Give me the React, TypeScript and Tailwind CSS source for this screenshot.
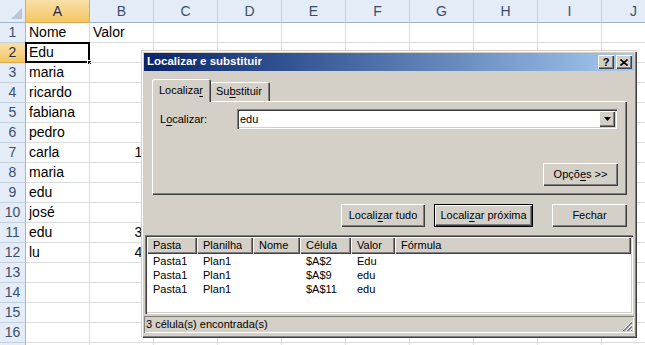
import React from "react";

const names = ["Nome", "Edu", "maria", "ricardo", "fabiana", "pedro", "carla", "maria", "edu", "josé", "edu", "lu"];
const nums: Record<number, string> = { 7: "10", 11: "30", 12: "40" };
const cols = ["A", "B", "C", "D", "E", "F", "G", "H", "I", "J"];

const raised = "shadow-[inset_1px_1px_#fff,inset_-1px_-1px_#404040,inset_-2px_-2px_#808080]";
const sunken = "shadow-[inset_1px_1px_#808080,inset_2px_2px_#404040,inset_-1px_-1px_#fff,inset_-2px_-2px_#d4d0c8]";

const U = ({ children }: { children: React.ReactNode }) => <span className="underline underline-offset-[2px]">{children}</span>;

const Sheet = () => (
    <div className="w-[645px] h-[345px] overflow-hidden bg-white font-['Liberation_Sans',Arial,sans-serif] text-[14px] text-black">
        <div className="flex h-[23px]">
            <div className="w-[26px] shrink-0 bg-[#e4ecf7] border-r border-b border-[#9eb6ce] relative">
                <div className="absolute right-[3px] bottom-[3px] w-0 h-0 border-l-[11px] border-l-transparent border-b-[11px] border-b-[#b8c6d8]"></div>
            </div>
            {cols.map((c, i) => (
                <div
                    key={c}
                    className={`w-[64px] shrink-0 border-r border-b flex items-center justify-center text-[14px] ${i === 0 ? "bg-gradient-to-b from-[#f9e1a8] to-[#f3c661] border-r-[#e2a94c] border-b-[#e2a94c] text-[#1f2f4a]" : "bg-[#e4ecf7] border-r-[#c3d0e0] border-b-[#9eb6ce] text-[#3a4f6d]"}`}
                >
                    {c}
                </div>
            ))}
        </div>
        {Array.from({ length: 16 }).map((_, r) => {
            const row = r + 1;
            const sel = row === 2;
            return (
                <div key={row} className="flex h-[20px]">
                    <div className={`w-[26px] shrink-0 border-r border-b flex items-center justify-center text-[14px] ${sel ? "bg-gradient-to-b from-[#f9e1a8] to-[#f3c661] border-r-[#e2a94c] border-b-[#e2a94c] text-[#1f2f4a]" : "bg-[#e4ecf7] border-r-[#9eb6ce] border-b-[#c3d0e0] text-[#3a4f6d]"}`}>
                        {row}
                    </div>
                    {cols.map((c, i) => (
                        <div key={c} className={`w-[64px] shrink-0 border-r border-b border-[#dadcdd] px-[3px] leading-[19px] whitespace-nowrap relative ${i === 1 && nums[row] ? "text-right" : ""}`}>
                            {i === 0 && names[r]}
                            {i === 1 && row === 1 && "Valor"}
                            {i === 1 && nums[row]}
                            {i === 0 && sel && (
                                <>
                                    <div className="absolute left-[-1px] top-[-1px] right-[-1px] bottom-[-1px] border-2 border-black"></div>
                                    <div className="absolute right-[-3px] bottom-[-3px] w-[5px] h-[5px] bg-black border border-white"></div>
                                </>
                            )}
                        </div>
                    ))}
                </div>
            );
        })}
        <div className="flex h-[20px]">
            <div className="w-[26px] shrink-0 border-r border-[#9eb6ce] bg-[#e4ecf7]"></div>
            {cols.map((c) => (
                <div key={c} className="w-[64px] shrink-0 border-r border-[#dadcdd]"></div>
            ))}
        </div>
    </div>
);

const Dialog = () => (
    <div className="absolute left-[141px] top-[50px] w-[496px] h-[288px] bg-[#d4d0c8] p-[3px] flex flex-col font-['Liberation_Sans',Arial,sans-serif] text-[11px] text-black shadow-[inset_1px_1px_#d4d0c8,inset_2px_2px_#fff,inset_-1px_-1px_#404040,inset_-2px_-2px_#808080]">
        {/* title */}
        <div className="h-[18px] flex items-center justify-between bg-gradient-to-r from-[#0a246a] to-[#a6caf0] pl-[3px] pr-[2px]">
            <span className="text-white font-bold text-[11.5px]">Localizar e substituir</span>
            <div className="flex gap-[2px]">
                <div className={`w-[16px] h-[14px] bg-[#d4d0c8] ${raised} flex items-center justify-center font-bold text-[11px] leading-none`}>?</div>
                <div className={`w-[16px] h-[14px] bg-[#d4d0c8] ${raised} flex items-center justify-center`}>
                    <svg width="8" height="7" viewBox="0 0 8 7">
                        <path d="M0.5 0.5 L7.5 6.5 M7.5 0.5 L0.5 6.5" stroke="#000" strokeWidth="1.6" />
                    </svg>
                </div>
            </div>
        </div>

        {/* tabs */}
        <div className="ml-[8px] mt-[8px] flex items-end h-[22px]">
            <div className="w-[59px] h-[23px] -mb-px relative z-10 bg-[#d4d0c8] rounded-t-[2px] shadow-[inset_1px_1px_#fff,inset_-1px_0_#404040,inset_-2px_0_#808080] flex items-center pl-[7px] pb-[1px]">
                Localiza<U>r</U>
            </div>
            <div className="w-[60px] h-[19px] -ml-[1px] bg-[#d4d0c8] rounded-t-[2px] shadow-[inset_1px_1px_#fff,inset_-1px_0_#404040,inset_-2px_0_#808080] flex items-center pl-[6px]">
                Su<U>b</U>stituir
            </div>
        </div>
        <div className={`ml-[8px] w-[475px] h-[94px] ${raised} flex flex-col`}>
            <div className="flex items-center mt-[8px] h-[20px]">
                <span className="w-[85px] pl-[8px]">
                    L<U>o</U>calizar:
                </span>
                <div className={`w-[380px] h-[20px] bg-white ${sunken} flex items-center justify-between pl-[3px] pr-[2px]`}>
                    <span>edu</span>
                    <div className={`w-[16px] h-[16px] bg-[#d4d0c8] ${raised} flex items-center justify-center`}>
                        <svg width="7" height="4" viewBox="0 0 7 4">
                            <path d="M0 0 H7 L3.5 4 Z" fill="#000" />
                        </svg>
                    </div>
                </div>
            </div>
            <div className="flex justify-end mt-[34px] pr-[9px]">
                <div className={`w-[75px] h-[23px] ${raised} flex items-center justify-center`}>
                    Opçõ<U>e</U>s &gt;&gt;
                </div>
            </div>
        </div>

        {/* buttons */}
        <div className="flex mt-[9px] ml-[197px] h-[23px]">
            <div className={`w-[84px] h-[23px] ${raised} flex items-center justify-center`}>
                Locali<U>z</U>ar tudo
            </div>
            <div className="ml-[9px] w-[99px] h-[23px] border border-black">
                <div className={`w-full h-full ${raised} flex items-center justify-center`}>
                    Locali<U>z</U>ar próxima
                </div>
            </div>
            <div className={`ml-[19px] w-[75px] h-[23px] ${raised} flex items-center justify-center`}>Fechar</div>
        </div>

        {/* results list */}
        <div className={`mt-[8px] ml-[1px] w-[488px] h-[79px] bg-white ${sunken} p-[2px]`}>
            <div className="flex h-[17px]">
                {[
                    ["Pasta", "w-[50px]"],
                    ["Planilha", "w-[56px]"],
                    ["Nome", "w-[47px]"],
                    ["Célula", "w-[51px]"],
                    ["Valor", "w-[44px]"],
                    ["Fórmula", "flex-1"],
                ].map(([t, w]) => (
                    <div key={t} className={`${w} h-[17px] bg-[#d4d0c8] ${raised} pl-[6px] leading-[16px]`}>
                        {t}
                    </div>
                ))}
            </div>
            {[
                ["$A$2", "Edu"],
                ["$A$9", "edu"],
                ["$A$11", "edu"],
            ].map(([cell, val]) => (
                <div key={cell} className="flex h-[14px] leading-[14px] first:mt-[1px]">
                    <span className="w-[50px] pl-[6px]">Pasta1</span>
                    <span className="w-[56px] pl-[6px]">Plan1</span>
                    <span className="w-[47px]"></span>
                    <span className="w-[51px] pl-[6px]">{cell}</span>
                    <span className="w-[44px] pl-[6px]">{val}</span>
                </div>
            ))}
        </div>

        {/* status */}
        <div className="mt-[2px] h-[17px] relative flex items-center pl-[2px] shadow-[inset_1px_1px_#808080,inset_-1px_-1px_#fff]">
            3 célula(s) encontrada(s)
            <svg className="absolute right-[1px] bottom-[1px]" width="12" height="12" viewBox="0 0 12 12">
                <path d="M11 1 L1 11 M11 5 L5 11 M11 9 L9 11" stroke="#fff" strokeWidth="1" />
                <path d="M11 2 L2 11 M11 3 L3 11 M11 6 L6 11 M11 7 L7 11 M11 10 L10 11" stroke="#808080" strokeWidth="1" />
            </svg>
        </div>
    </div>
);

const App = () => {
    return (
        <div className="relative w-[645px] h-[345px] overflow-hidden">
            <Sheet />
            <Dialog />
        </div>
    );
};

export default App;
